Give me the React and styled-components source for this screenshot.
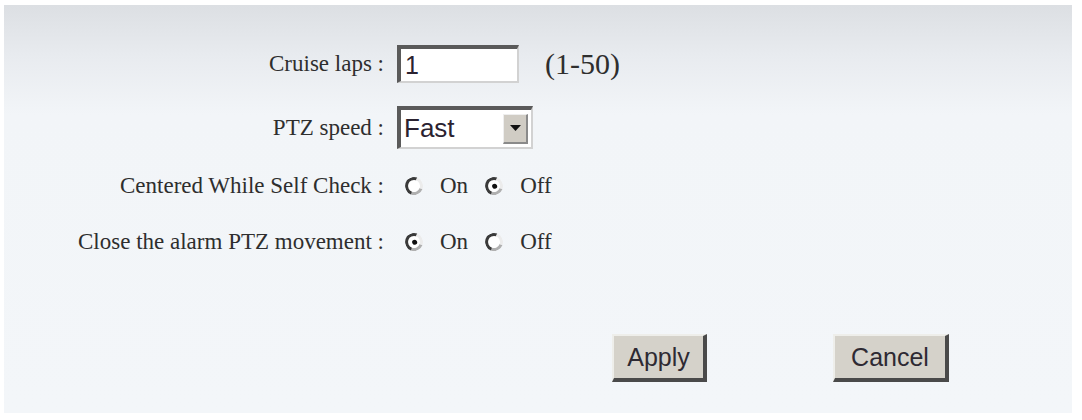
import React, { useState } from "react";
import styled, { createGlobalStyle } from "styled-components";

const GlobalStyle = createGlobalStyle`
  html, body {
    margin: 0;
    padding: 0;
    background: #ffffff;
  }
`;

const Panel = styled.div`
  margin: 5px 10px 0 4px;
  height: 408px;
  box-sizing: border-box;
  padding-top: 29px;
  background: linear-gradient(#dcdfe3 0, #e8ebef 50px, #f2f5f8 110px, #f3f6f9 100%);
  font-family: "Liberation Serif", "Times New Roman", serif;
  color: #2e2e2e;
`;

const Form = styled.div`
  display: grid;
  grid-template-columns: 380px 1fr;
  column-gap: 13px;
`;

const Label = styled.div`
  height: ${(p) => p.$h}px;
  display: flex;
  align-items: center;
  justify-content: flex-end;
  font-size: 23px;
  white-space: nowrap;
`;

const Control = styled.div`
  height: ${(p) => p.$h}px;
  display: flex;
  align-items: center;
`;

const TextInput = styled.input`
  width: 122px;
  height: 38px;
  box-sizing: border-box;
  border-style: solid;
  border-width: 4px 2px 2px 4px;
  border-color: #5a5a5a #d2d2d2 #d2d2d2 #5a5a5a;
  background: #fff;
  padding: 0 4px;
  font-family: "Liberation Sans", Arial, sans-serif;
  font-size: 25px;
  color: #2a2230;
  outline: none;
`;

const Range = styled.span`
  margin-left: 26px;
  font-size: 30px;
`;

const SelectBox = styled.div`
  width: 136px;
  height: 43px;
  box-sizing: border-box;
  border-style: solid;
  border-width: 4px 2px 2px 4px;
  border-color: #5a5a5a #d2d2d2 #d2d2d2 #5a5a5a;
  background: #fff;
  display: flex;
  align-items: center;
  justify-content: space-between;
  padding: 0 3px;
`;

const SelectValue = styled.span`
  font-family: "Liberation Sans", Arial, sans-serif;
  font-size: 26px;
  color: #2a2230;
`;

const ArrowButton = styled.span`
  width: 25px;
  height: 30px;
  box-sizing: border-box;
  background: #d0ccc4;
  border-style: solid;
  border-width: 1px 2px 2px 1px;
  border-color: #eeeeee #8a8a8a #8a8a8a #eeeeee;
  display: flex;
  align-items: center;
  justify-content: center;
`;

const RadioGroup = styled.div`
  display: flex;
  align-items: center;
  margin-left: 8px;
`;

const RadioItem = styled.label`
  display: flex;
  align-items: center;
  margin-right: 17px;
  font-size: 23px;
  cursor: pointer;
`;

const RadioCircle = styled.span`
  width: 18px;
  height: 18px;
  box-sizing: border-box;
  border-radius: 50%;
  border: 3px solid;
  border-color: #3a3a3a #ececec #b0b0b0 #3a3a3a;
  transform: rotate(-25deg);
  background: #fff;
  margin-right: 17px;
  display: flex;
  align-items: center;
  justify-content: center;

  &::after {
    content: "";
    width: 5px;
    height: 5px;
    border-radius: 50%;
    background: ${(p) => (p.$checked ? "#111" : "transparent")};
  }
`;

const ButtonRow = styled.div`
  display: flex;
  margin: 61px 0 0 608px;
  gap: 126px;
`;

const Button = styled.button`
  height: 48px;
  min-width: ${(p) => p.$w}px;
  box-sizing: border-box;
  background: #d5d2ca;
  border-style: solid;
  border-width: 2px 4px 4px 2px;
  border-color: #eeeeea #4a4a4a #4a4a4a #eeeeea;
  font-family: "Liberation Sans", Arial, sans-serif;
  font-size: 25px;
  color: #2e2a33;
  padding: 0;
  cursor: pointer;
`;

const Radio = ({ checked, label, onClick }) => (
  <RadioItem onClick={onClick}>
    <RadioCircle $checked={checked} />
    {label}
  </RadioItem>
);

export default function App() {
  const [laps, setLaps] = useState("1");
  const [centered, setCentered] = useState("off");
  const [closeAlarm, setCloseAlarm] = useState("on");

  return (
    <>
      <GlobalStyle />
      <Panel>
        <Form>
          <Label $h={60}>Cruise laps :</Label>
          <Control $h={60}>
            <TextInput value={laps} onChange={(e) => setLaps(e.target.value)} />
            <Range>(1-50)</Range>
          </Control>

          <Label $h={67}>PTZ speed :</Label>
          <Control $h={67}>
            <SelectBox>
              <SelectValue>Fast</SelectValue>
              <ArrowButton>
                <svg width="11" height="6" viewBox="0 0 11 6">
                  <path d="M0 0h11L5.5 6z" fill="#111" />
                </svg>
              </ArrowButton>
            </SelectBox>
          </Control>

          <Label $h={50}>Centered While Self Check :</Label>
          <Control $h={50}>
            <RadioGroup>
              <Radio checked={centered === "on"} label="On" onClick={() => setCentered("on")} />
              <Radio checked={centered === "off"} label="Off" onClick={() => setCentered("off")} />
            </RadioGroup>
          </Control>

          <Label $h={62}>Close the alarm PTZ movement :</Label>
          <Control $h={62}>
            <RadioGroup>
              <Radio checked={closeAlarm === "on"} label="On" onClick={() => setCloseAlarm("on")} />
              <Radio checked={closeAlarm === "off"} label="Off" onClick={() => setCloseAlarm("off")} />
            </RadioGroup>
          </Control>
        </Form>

        <ButtonRow>
          <Button $w={95}>Apply</Button>
          <Button $w={116}>Cancel</Button>
        </ButtonRow>
      </Panel>
    </>
  );
}
